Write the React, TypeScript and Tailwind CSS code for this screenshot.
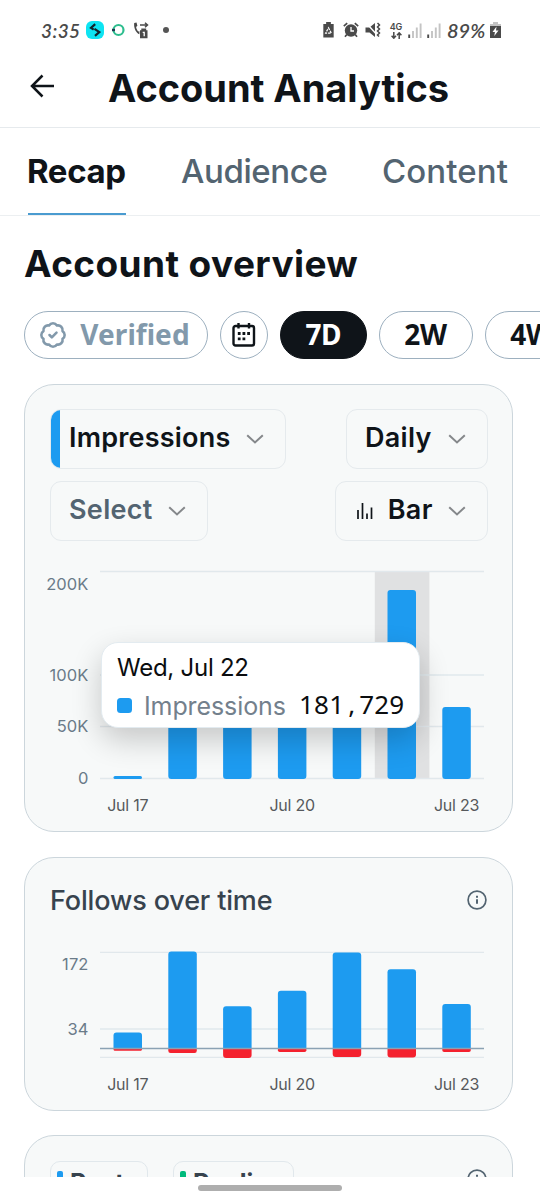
import type { ReactNode } from 'react';
import { BadgeCheck } from 'lucide-react';

const DAYS = [
  { label: 'Jul 17', impressions: 3, follows: 16, unfollows: 2.2 },
  { label: '', impressions: 110, follows: 97, unfollows: 4.5 },
  { label: '', impressions: 110, follows: 42.2, unfollows: 9.5 },
  { label: 'Jul 20', impressions: 110, follows: 57.8, unfollows: 3.6 },
  { label: '', impressions: 110, follows: 96, unfollows: 8.4 },
  { label: '', impressions: 189, follows: 79.2, unfollows: 9 },
  { label: 'Jul 23', impressions: 72, follows: 44.5, unfollows: 3.6 },
];

const barX = (i: number) => 63 + i * 54.8;

function roundedTop(x: number, y: number, w: number, h: number, r: number) {
  return `M${x} ${y + h}v${-(h - r)}q0 ${-r} ${r} ${-r}h${w - 2 * r}q${r} 0 ${r} ${r}v${h - r}z`;
}

function roundedBottom(x: number, y: number, w: number, h: number, r: number) {
  return `M${x} ${y}h${w}v${h - r}q0 ${r} ${-r} ${r}h${-(w - 2 * r)}q${-r} 0 ${-r} ${-r}z`;
}

function DateLabels({ y }: { y: number }) {
  return (
    <>
      {DAYS.map((d, i) =>
        d.label ? (
          <text key={i} x={barX(i) + 14.8} y={y} textAnchor="middle" className="fill-[#56595c] text-[16px] tracking-[-0.2px]">
            {d.label}
          </text>
        ) : null,
      )}
    </>
  );
}

function ValueLabel({ y, children }: { y: number; children: ReactNode }) {
  return (
    <text x={38.5} y={y} textAnchor="end" className="fill-[#6a7b89] text-[16.5px] tracking-[0.1px]">
      {children}
    </text>
  );
}

function ImpressionsChart() {
  return (
    <svg width="438" height="260" viewBox="0 0 438 260" className="block overflow-visible">
      <rect x="324.8" y="1.5" width="54.6" height="207" fill="#e0e1e2" />
      {[1.5, 105, 156.5, 208.5].map((y) => (
        <line key={y} x1="50" x2="434" y1={y} y2={y} stroke="#e1e8ec" strokeWidth="1.3" />
      ))}
      <ValueLabel y={19.6}>200K</ValueLabel>
      <ValueLabel y={110.6}>100K</ValueLabel>
      <ValueLabel y={162.4}>50K</ValueLabel>
      <ValueLabel y={214.4}>0</ValueLabel>
      {DAYS.map((d, i) => (
        <rect key={i} x={barX(i) + 0.5} y={209 - d.impressions} width="28.5" height={d.impressions} rx={Math.min(3, d.impressions / 2)} fill="#1d9bf0" />
      ))}
      <DateLabels y={241} />
    </svg>
  );
}

function FollowsChart() {
  return (
    <svg width="438" height="160" viewBox="0 0 438 160" className="block overflow-visible">
      {[12.3, 89, 117.3].map((y) => (
        <line key={y} x1="50" x2="434" y1={y} y2={y} stroke="#e1e8ec" strokeWidth="1.3" />
      ))}
      <ValueLabel y={30.2}>172</ValueLabel>
      <ValueLabel y={95.2}>34</ValueLabel>
      {DAYS.map((d, i) => (
        <g key={i}>
          <path d={roundedTop(barX(i) + 0.5, 108.5 - d.follows, 28.5, d.follows, 3)} fill="#1d9bf0" />
          <path d={roundedBottom(barX(i) + 0.5, 108.5, 28.5, d.unfollows, Math.min(3, d.unfollows / 2))} fill="#f4212e" />
        </g>
      ))}
      <line x1="50" x2="434" y1="108.5" y2="108.5" stroke="#8ba2b4" strokeWidth="1.5" />
      <DateLabels y={149.6} />
    </svg>
  );
}

function Chevron() {
  return (
    <svg width="18" height="10" viewBox="0 0 18 10" fill="none" stroke="#85888b" strokeWidth="2">
      <path d="M1.2 1.2 9 8.4l7.8-7.2" />
    </svg>
  );
}

function Info() {
  return (
    <svg width="20" height="20" viewBox="0 0 20 20" fill="none" stroke="#536471">
      <circle cx="10" cy="10" r="8.9" strokeWidth="1.7" />
      <path d="M10 9.2v4.6M10 5.7v2" strokeWidth="2" />
    </svg>
  );
}

function Dropdown({ className, children }: { className: string; children: ReactNode }) {
  return (
    <button className={`flex h-[60px] items-center justify-between overflow-hidden rounded-[11px] border-[1.3px] border-[#e5eaed] bg-[#f7f9f9] text-[27px] leading-none font-semibold ${className}`}>
      {children}
      <Chevron />
    </button>
  );
}

function Pill({ className, children }: { className: string; children: ReactNode }) {
  return (
    <button className={`flex h-12 shrink-0 items-center justify-center rounded-full border font-['Noto_Sans',sans-serif] text-[28px] leading-none font-bold ${className}`}>
      {children}
    </button>
  );
}

function StatusBar() {
  return (
    <div className="flex h-[60px] items-center justify-between pr-[39px] pl-[41px] text-[#4a4a4a]">
      <div className="flex items-center">
        <span className="w-[45px] font-['Lato',sans-serif] text-[19px] leading-none font-semibold tracking-[0.4px] italic">3:35</span>
        <svg width="18" height="18" viewBox="0 0 18 18">
          <rect width="18" height="18" rx="6" fill="#0de4f2" />
          <path d="M9.200 3.200 5 6.800l2.700 1.900M9 14.800l4.300-3.700-4.800-3.200" fill="none" stroke="#10242c" strokeWidth="2.200" />
        </svg>
        <svg width="14" height="14" viewBox="0 0 14 14" className="ml-[7px]" fill="none">
          <circle cx="7.5" cy="7" r="5" stroke="#2dbd8e" strokeWidth="2.2" />
          <path d="M1 7h3" stroke="#1d3850" strokeWidth="2.4" />
        </svg>
        <svg width="16" height="17" viewBox="0 0 16 17" className="ml-2">
          <path d="M1.2 1 3.5.6l.9 3.2-1.3 1.1c.4 2 1.1 3.3 2.3 4.7l1-.4v3C3.200 11.400.500 6 1.200 1z" fill="#4a4a4a" />
          <path d="M7 3h7M12 .8 14.500 3 12 5.200" fill="none" stroke="#4a4a4a" strokeWidth="1.500" />
          <path d="M7 8.200h1.300V6.500h4.900v1.700h1.300v8H7z" fill="#4a4a4a" />
          <path d="M9.700 10.300h1.500v4" fill="none" stroke="#fff" strokeWidth="1.300" />
        </svg>
        <span className="ml-[14px] size-[6px] rounded-full bg-[#555]" />
      </div>
      <div className="flex items-center">
        <svg width="11" height="16" viewBox="0 0 11 17">
          <path d="M3 0h5v2h3v14.500H0V2h3z" fill="#4a4a4a" />
          <path d="M5.500 6.200 8.500 11.800h-6z" fill="none" stroke="#fff" strokeWidth="1.300" strokeDasharray="2.600 1" />
        </svg>
        <svg width="16" height="16" viewBox="0 0 16 16" className="ml-[9px]">
          <circle cx="8" cy="8.500" r="6.200" fill="#4a4a4a" />
          <path d="M.8 4.200 4.200 1.200M15.200 4.200l-3.400-3M3.800 12.500 2 14.800M12.200 12.500l1.800 2.300" stroke="#4a4a4a" strokeWidth="1.700" />
          <path d="M8 5v4h3" fill="none" stroke="#fff" strokeWidth="1.300" />
        </svg>
        <svg width="17" height="16" viewBox="0 0 17 16" className="ml-[6px]">
          <path d="M.5 5.500h4L10 1v14l-5.500-4.500h-4z" fill="#4a4a4a" />
          <path d="M1 .8 11 11.800" stroke="#fff" strokeWidth="1.400" />
          <path d="m12.500 1 2 2-2 2 2 2-2 2 2 2-2 2 1.500 1.500" fill="none" stroke="#4a4a4a" strokeWidth="1.500" />
        </svg>
        <div className="mt-px ml-[7px] flex w-[14px] flex-col items-center gap-px">
          <span className="font-['Inter',sans-serif] text-[9px] leading-[8px] font-semibold">4G</span>
          <svg width="11" height="7" viewBox="0 0 11 7" fill="none" stroke="#4a4a4a" strokeWidth="1.500">
            <path d="M2.800 0v6M.6 3.800l2.200 2.400L5 3.800M8.200 7V1M6 3.200 8.200.8l2.200 2.400" />
          </svg>
        </div>
        {[0, 1].map((n) => (
          <svg key={n} width="14" height="15" viewBox="0 0 14 15" className="ml-[5px]">
            <path d="M1.200 11.500V15" stroke="#4a4a4a" strokeWidth="1.900" />
            <path d="M5 8v7M8.800 4.500V15M12.600.500V15" stroke="#c4c4c4" strokeWidth="1.900" />
          </svg>
        ))}
        <span className="ml-[6px] w-[43px] font-['Lato',sans-serif] text-[20px] leading-none font-semibold whitespace-nowrap italic">89%</span>
        <svg width="11" height="16" viewBox="0 0 11 16">
          <path d="M3 0h5v2h3v3H0V2h3z" fill="#c4c4c4" />
          <path d="M0 4h11v12H0z" fill="#4a4a4a" />
          <path d="M6.500 4.500 2.500 10h2.400l-.6 4 4.200-5.600H6z" fill="#fff" />
        </svg>
      </div>
    </div>
  );
}

function Tooltip() {
  return (
    <div className="absolute top-[257px] left-[76px] flex h-[86px] w-[319px] flex-col rounded-[17px] border border-[#e3ebf0] bg-white pl-[15px] shadow-[0_12px_30px_rgba(0,0,0,0.2)]">
      <div className="mt-[12px] text-[24px] leading-[26px] tracking-[-0.25px] text-[#0b0d0f]">Wed, Jul 22</div>
      <div className="mt-[9px] flex items-center leading-[28px]">
        <span className="size-[15px] rounded-[3.5px] bg-[#1d9bf0]" />
        <span className="ml-[12px] w-[155px] text-[25px] tracking-[-0.1px] text-[#73808c]">Impressions</span>
        <span className="pb-[4px] font-['Noto_Sans',sans-serif] text-[26px] tracking-[0.2px] text-[#0b0d0f]">
          181<span className="inline-block w-[15px] text-center">,</span>729
        </span>
      </div>
    </div>
  );
}

export default function App() {
  return (
    <div className="flex h-[1199px] w-[540px] flex-col overflow-hidden bg-white font-['Inter',sans-serif] text-[#0f1419]">
      <header className="h-[128px] shrink-0 border-b border-[#e6eaed]">
        <StatusBar />
        <div className="flex h-[56px] items-center">
          <svg width="25" height="24" viewBox="0 0 25 24" fill="none" stroke="#0f1419" strokeWidth="2.500" className="-mt-[4px] mr-[53px] ml-[30px]">
            <path d="M24 12H2M12.500 1.500 2 12l10.500 10.500" />
          </svg>
          <h1 className="text-[38px] leading-none font-bold tracking-[-0.050px] whitespace-nowrap">Account Analytics</h1>
        </div>
      </header>

      <nav className="flex h-[88px] shrink-0 border-b border-[#eceff1] pl-7 text-[33px] leading-[86px] whitespace-nowrap">
        <div className="mr-[55px] w-[98px] border-b-2 border-[#4a9bd0]">
          <span className="-ml-px font-bold tracking-[-0.400px]">Recap</span>
        </div>
        <div className="mr-[54px] w-[147px] font-medium tracking-[-0.400px] text-[#536471]">Audience</div>
        <div className="font-medium tracking-[0.100px] text-[#536471]">Content</div>
      </nav>

      <main className="flex h-[961px] shrink-0 flex-col overflow-hidden px-6">
        <h2 className="mt-[25px] text-[37px] leading-[46px] font-bold tracking-[0.400px] whitespace-nowrap">Account overview</h2>

        <div className="mt-[24px] flex gap-3">
          <Pill className="w-[184px] gap-[13px] border-[#9db0bf] text-[#8299ab]">
            <BadgeCheck size={28} strokeWidth={2.2} />
            <span className="mr-[3px] pb-[3px] tracking-[0.050px]">Verified</span>
          </Pill>
          <Pill className="w-12 border-[#9db0bf]">
            <svg width="24" height="24" viewBox="0 0 24 24" fill="none" stroke="#0f1419" strokeWidth="2.400">
              <rect x="1.500" y="3" width="20.500" height="19.500" rx="2" />
              <path d="M6.500 0v5.500M17 0v5.500" />
              <path d="M5.800 10.500h2.800m1.900 0h2.800m1.900 0H18M5.800 15.800h2.800m1.900 0h2.800" strokeWidth="2.800" />
            </svg>
          </Pill>
          <Pill className="w-[86.500px] border-[#0f1419] bg-[#0f1419] text-white">
            <span className="pb-[3px] tracking-[-0.400px]">7D</span>
          </Pill>
          <Pill className="w-[94px] border-[#9db0bf]">
            <span className="pb-[3px] tracking-[-0.200px]">2W</span>
          </Pill>
          <Pill className="w-[94px] border-[#9db0bf]">
            <span className="pb-[3px] tracking-[-0.200px]">4W</span>
          </Pill>
        </div>

        <section className="relative mt-[24.500px] h-[448.500px] w-[489px] shrink-0 rounded-[30px] border-[1.300px] border-[#ccd6dc] bg-[#f7f9f9] px-[25px] pt-[24px]">
          <div className="-mr-[1px] flex justify-between">
            <Dropdown className="relative w-[236px] pr-[21px] pl-[18px]">
              <span className="absolute inset-y-0 left-0 w-[9px] bg-[#1d9bf0]" />
              <span className="pb-[3px] tracking-[0.200px]">Impressions</span>
            </Dropdown>
            <Dropdown className="w-[142px] pr-[21px] pl-[18px]">
              <span className="pb-[3px] tracking-[0.300px]">Daily</span>
            </Dropdown>
          </div>
          <div className="-mr-[1px] mt-3 flex justify-between">
            <Dropdown className="w-[157.500px] pr-[21px] pl-[18px] text-[#536471]">
              <span className="pb-[3px] tracking-[0.300px]">Select</span>
            </Dropdown>
            <Dropdown className="w-[153.500px] pr-[21px] pl-[21px]">
              <svg width="16" height="18" viewBox="0 0 16 18" stroke="#0f1419" strokeWidth="1.700">
                <path d="M1 8v9M5.500 1v16M10 11.500V17M14.500 5.500V17" />
              </svg>
              <span className="pb-[3px] tracking-[0.400px]">Bar</span>
            </Dropdown>
          </div>
          <div className="mt-[29.500px]">
            <ImpressionsChart />
          </div>
          <Tooltip />
        </section>

        <section className="mt-[24.500px] h-[254px] w-[489px] shrink-0 rounded-[30px] border-[1.300px] border-[#ccd6dc] bg-[#f7f9f9] px-[25px] pt-[28px]">
          <div className="flex h-[30px] items-center justify-between pb-px">
            <h3 className="text-[27px] leading-none font-medium tracking-[-0.150px] text-[#37434e]">Follows over time</h3>
            <Info />
          </div>
          <div className="mt-[24px]">
            <FollowsChart />
          </div>
        </section>

        <section className="mt-[24.500px] h-[253px] w-[489px] shrink-0 rounded-[30px] border-[1.300px] border-[#ccd6dc] bg-[#f7f9f9] px-[25px] pt-[24.500px]">
          <div className="flex text-[25px] leading-none font-bold text-[#37434e]">
            <div className="flex h-[42px] w-[98px] items-center rounded-[10px] border-[1.300px] border-[#e1e8ec] pl-[6px]">
              <span className="mr-[7px] h-[22px] w-[6px] rounded-[2px] bg-[#1d9bf0]" />
              <span className="pt-[3px]">Posts</span>
            </div>
            <div className="ml-[25px] flex h-[42px] w-[121px] items-center rounded-[10px] border-[1.300px] border-[#e1e8ec] pl-[6px]">
              <span className="mr-[7px] h-[22px] w-[6px] rounded-[2px] bg-[#00ba7c]" />
              <span className="pt-[3px]">Replies</span>
            </div>
            <div className="ml-auto pt-[8px]">
              <Info />
            </div>
          </div>
        </section>
      </main>

      <footer className="flex grow items-start justify-center bg-white pt-2">
        <div className="h-[6px] w-[144px] rounded-full bg-[#aeaeae]" />
      </footer>
    </div>
  );
}
